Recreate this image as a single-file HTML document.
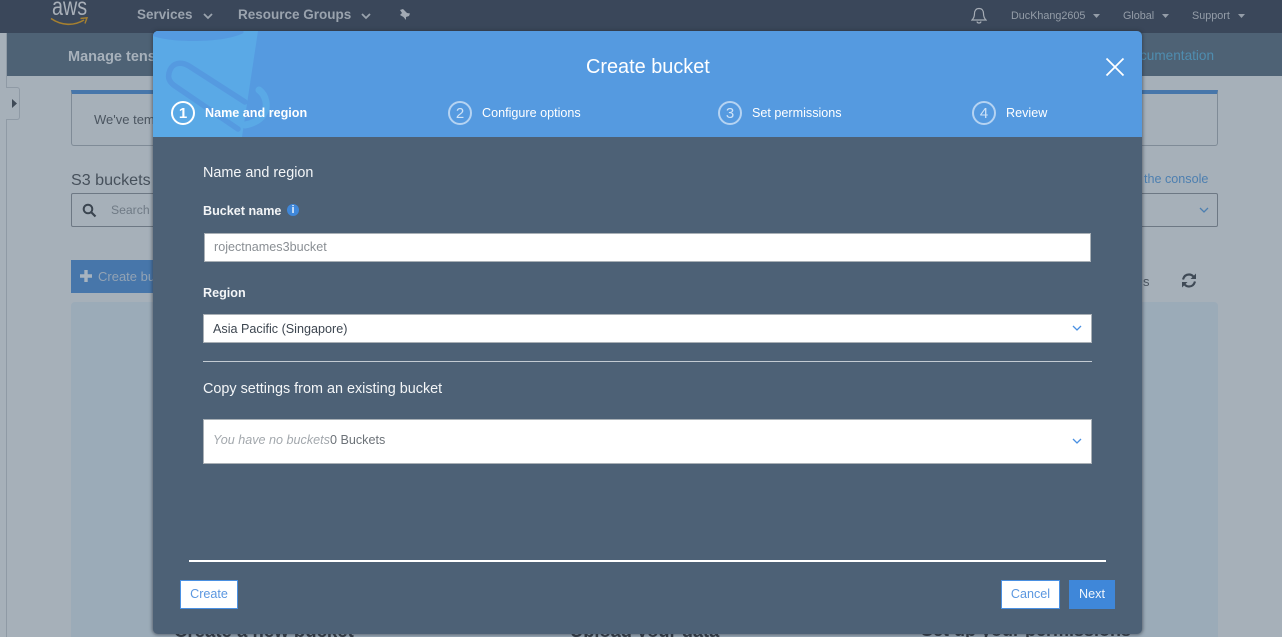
<!DOCTYPE html>
<html lang="en">
<head>
<meta charset="utf-8">
<title>Create bucket</title>
<style>
html,body{margin:0;padding:0;width:1282px;height:637px;overflow:hidden;background:#a6b0b9;font-family:"Liberation Sans",Arial,sans-serif}
.a{position:absolute;white-space:nowrap}
.box{position:absolute;box-sizing:border-box}
#root{position:absolute;left:0;top:0;width:1282px;height:637px;overflow:hidden}
.nav{color:#9aa3ae;font-size:13.500px;font-weight:bold}
.nav2{color:#949da8;font-size:10.800px}
.step{color:#fff;font-size:12.600px;top:106px}
.num{position:absolute;box-sizing:border-box;width:24px;height:24px;border-radius:50%;border:2px solid #b5d3f2;color:#cfe3f7;font-size:15px;line-height:21px;text-align:center;top:101px}
.inp{position:absolute;box-sizing:border-box;background:#fff;border:1px solid #a9b0b6}
</style>
</head>
<body>
<div id="root">
<!-- top bar -->
<div class="box" style="left:0;top:0;width:1282px;height:33px;background:#3a475a"></div>
<div class="a" style="left:52px;top:-6px;font-size:25px;color:#a9b0b9;line-height:26px;transform:scaleX(.79);transform-origin:0 0">aws</div>
<svg class="a" style="left:50px;top:17px" width="40" height="10" viewBox="0 0 40 10"><path d="M1 1.500C12 9 24 9 34 3" fill="none" stroke="#a6802f" stroke-width="1.600"/><path d="M30.500 1.500L37 .8 35 6.500" fill="none" stroke="#a6802f" stroke-width="1.400"/></svg>
<div class="a nav" style="left:137px;top:7px">Services</div>
<svg class="a" style="left:203px;top:13px" width="10" height="7"><path d="M1 1l4 4 4-4" fill="none" stroke="#9aa3ae" stroke-width="1.800"/></svg>
<div class="a nav" style="left:238px;top:7px">Resource Groups</div>
<svg class="a" style="left:361px;top:13px" width="10" height="7"><path d="M1 1l4 4 4-4" fill="none" stroke="#9aa3ae" stroke-width="1.800"/></svg>
<svg class="a" style="left:398px;top:9px" width="12" height="11" viewBox="0 0 12 11"><path d="M2 1L5 0l4 4 3 .5L11 7 8 8v3L5.500 8 2 6l2-2z" fill="#a2aab4"/></svg>
<svg class="a" style="left:971px;top:7px" width="16" height="18" viewBox="0 0 16 18"><path d="M8 1.500c3 0 4.500 2.200 4.500 5 0 3.500 1 5 2.500 6.500H1c1.500-1.500 2.500-3 2.500-6.500 0-2.800 1.500-5 4.500-5zM6 14.500c.3 2 3.700 2 4 0" fill="none" stroke="#a5acb5" stroke-width="1.200"/></svg>
<div class="a nav2" style="left:1011px;top:10px">DucKhang2605</div>
<svg class="a" style="left:1093px;top:14px" width="7" height="4"><path d="M0 0h7L3.500 4z" fill="#949da8"/></svg>
<div class="a nav2" style="left:1123px;top:10px">Global</div>
<svg class="a" style="left:1162px;top:14px" width="7" height="4"><path d="M0 0h7L3.500 4z" fill="#949da8"/></svg>
<div class="a nav2" style="left:1192px;top:10px">Support</div>
<svg class="a" style="left:1238px;top:14px" width="7" height="4"><path d="M0 0h7L3.500 4z" fill="#949da8"/></svg>

<!-- sub bar -->
<div class="box" style="left:0;top:33px;width:7px;height:604px;background:#a6b0b9;border-right:1px solid #8f9aa5"></div>
<div class="box" style="left:7px;top:33px;width:1275px;height:43px;background:#4e6275"></div>
<div class="a" style="left:68px;top:49px;font-size:14.500px;font-weight:bold;color:#a7b1bb">Manage tens</div>
<div class="a" style="left:1140px;top:48px;font-size:13.600px;color:#4f8db0">cumentation</div>
<div class="box" style="left:6px;top:87px;width:14px;height:33px;background:#a6b0b9;border:1px solid #8f9aa5;border-left:0;border-radius:0 3px 3px 0"></div>
<svg class="a" style="left:12px;top:99px" width="6" height="9"><path d="M0 0l5 4.500L0 9z" fill="#3f4a57"/></svg>

<!-- background panel -->
<div class="box" style="left:71px;top:90px;width:1147px;height:56px;border:1px solid #7f8b97;border-top:4px solid #4776aa;border-radius:0 0 3px 3px"></div>
<div class="a" style="left:94px;top:112px;font-size:13px;color:#4b5560">We've tem</div>
<div class="a" style="left:71px;top:171px;font-size:16.100px;color:#46505b">S3 buckets</div>
<div class="a" style="left:1144px;top:172px;font-size:12.600px;color:#4d7fb0">the console</div>
<div class="box" style="left:71px;top:193px;width:1147px;height:34px;border:1px solid #6d7884;border-radius:2px"></div>
<svg class="a" style="left:82px;top:203px" width="15" height="15" viewBox="0 0 15 15"><circle cx="6" cy="6" r="4.300" fill="none" stroke="#3b4550" stroke-width="2"/><path d="M9.500 9.500l4 4" stroke="#3b4550" stroke-width="2.200"/></svg>
<div class="a" style="left:111px;top:203px;font-size:12.200px;color:#6f7a85">Search</div>
<svg class="a" style="left:1199px;top:207px" width="10" height="7"><path d="M1 1l4 4 4-4" fill="none" stroke="#4d7fb0" stroke-width="1.300"/></svg>
<div class="box" style="left:71px;top:260px;width:90px;height:33px;background:#4776aa"></div>
<svg class="a" style="left:80px;top:270px" width="12" height="12"><path d="M6 0v12M0 6h12" stroke="#a7b3bf" stroke-width="3.400"/></svg>
<div class="a" style="left:98px;top:269px;font-size:13px;color:#93a3b4">Create bu</div>
<div class="a" style="left:1143px;top:274px;font-size:13px;color:#4b5560">s</div>
<svg class="a" style="left:1181px;top:273px" width="16" height="15" viewBox="0 0 16 15"><path d="M2 6.500C3 3 5.500 1.500 8 1.500c1.800 0 3.300.7 4.300 2M14 8.500c-1 3.500-3.500 5-6 5-1.800 0-3.300-.7-4.300-2" fill="none" stroke="#3f4a56" stroke-width="2.200"/><path d="M15 .5v5.500H9.500zM1 14.500V9h5.500z" fill="#3f4a56"/></svg>
<div class="box" style="left:71px;top:302px;width:1147px;height:335px;background:#9babb8;border-radius:4px 4px 0 0"></div>
<div class="a" style="left:174px;top:620px;font-size:18.600px;font-weight:bold;color:#333c46">Create a new bucket</div>
<div class="a" style="left:570px;top:620px;font-size:18.300px;font-weight:bold;color:#333c46">Upload your data</div>
<div class="a" style="left:921px;top:620px;font-size:18px;font-weight:bold;color:#333c46">Set up your permissions</div>

<!-- modal -->
<div class="box" style="left:153px;top:31px;width:989px;height:603px;background:#4d6176;border-radius:5px;box-shadow:0 0 3px 1px rgba(40,48,58,.55);overflow:hidden">
  <div class="box" style="left:0;top:0;width:989px;height:106px;background:#559ae0;overflow:hidden">
    <svg style="position:absolute;left:0;top:0" width="125" height="106" viewBox="0 0 125 106">
      <path d="M0 0H105L89 106H0z" fill="#5aa9e6"/>
      <path d="M0 0H90.500V2C78 8 60 10 40 10 22 10 8 8 0 5z" fill="#559ae0"/>
      <path d="M92 71L36 35C28 30 20 32 17 39 14 46 16 51 22 55L85 98" fill="none" stroke="#559ae0" stroke-width="5.500" stroke-linecap="round"/>
      <path d="M106 59C113 64 116 76 110 84 106 90 98 93 92 94" fill="none" stroke="#5aa9e6" stroke-width="7" stroke-linecap="round"/>
    </svg>
  </div>
</div>
<div class="a" style="left:586px;top:55px;font-size:19.900px;color:#fff;line-height:24px">Create bucket</div>
<svg class="a" style="left:1105px;top:57px" width="20" height="20"><path d="M1.500 1.500l17 17M18.500 1.500l-17 17" stroke="#fff" stroke-width="1.800"/></svg>

<div class="num" style="left:171px;border-color:#fff;color:#fff;font-weight:bold">1</div>
<div class="a step" style="left:205px;font-weight:bold">Name and region</div>
<div class="num" style="left:448px">2</div>
<div class="a step" style="left:482px">Configure options</div>
<div class="num" style="left:718px">3</div>
<div class="a step" style="left:752px">Set permissions</div>
<div class="num" style="left:972px">4</div>
<div class="a step" style="left:1006px">Review</div>

<div class="a" style="left:203px;top:165px;font-size:14.400px;color:#f3f5f7">Name and region</div>
<div class="a" style="left:203px;top:204px;font-size:12.600px;font-weight:bold;color:#f3f5f7">Bucket name</div>
<div class="box" style="left:287px;top:204px;width:12px;height:12px;border-radius:50%;background:#3f87d9;color:#e4eefa;font:bold 11px/12px 'Liberation Sans',sans-serif;text-align:center">i</div>
<div class="inp" style="left:204px;top:233px;width:887px;height:29px"></div>
<div class="a" style="left:214px;top:240px;font-size:12.600px;color:#8a8f94">rojectnames3bucket</div>
<div class="a" style="left:203px;top:286px;font-size:12.600px;font-weight:bold;color:#f3f5f7">Region</div>
<div class="inp" style="left:203px;top:314px;width:889px;height:29px"></div>
<div class="a" style="left:213px;top:322px;font-size:12.600px;color:#3d4650">Asia Pacific (Singapore)</div>
<svg class="a" style="left:1072px;top:325px" width="10" height="7"><path d="M1 1l4 4 4-4" fill="none" stroke="#4a90e2" stroke-width="1.300"/></svg>
<div class="box" style="left:203px;top:361px;width:889px;height:1px;background:#c3cbd3"></div>
<div class="a" style="left:203px;top:381px;font-size:14.400px;color:#f3f5f7">Copy settings from an existing bucket</div>
<div class="inp" style="left:203px;top:419px;width:889px;height:45px"></div>
<div class="a" style="left:213px;top:433px;font-size:12.600px;color:#a3a8ad"><i>You have no buckets</i><span style="color:#6c7278">0 Buckets</span></div>
<svg class="a" style="left:1072px;top:438px" width="10" height="7"><path d="M1 1l4 4 4-4" fill="none" stroke="#4a90e2" stroke-width="1.300"/></svg>

<div class="box" style="left:189px;top:560px;width:917px;height:2px;background:#fff"></div>
<div class="box" style="left:180px;top:580px;width:58px;height:29px;background:#fff;border:1px solid #4a90e2;color:#5b97e0;font-size:12.600px;line-height:26px;text-align:center">Create</div>
<div class="box" style="left:1001px;top:580px;width:59px;height:29px;background:#fff;border:1px solid #4a90e2;color:#5b97e0;font-size:12.600px;line-height:26px;text-align:center">Cancel</div>
<div class="box" style="left:1069px;top:580px;width:46px;height:29px;background:#3f87d9;color:#f1f6fc;font-size:12.600px;line-height:28px;text-align:center">Next</div>
</div>
</body>
</html>
